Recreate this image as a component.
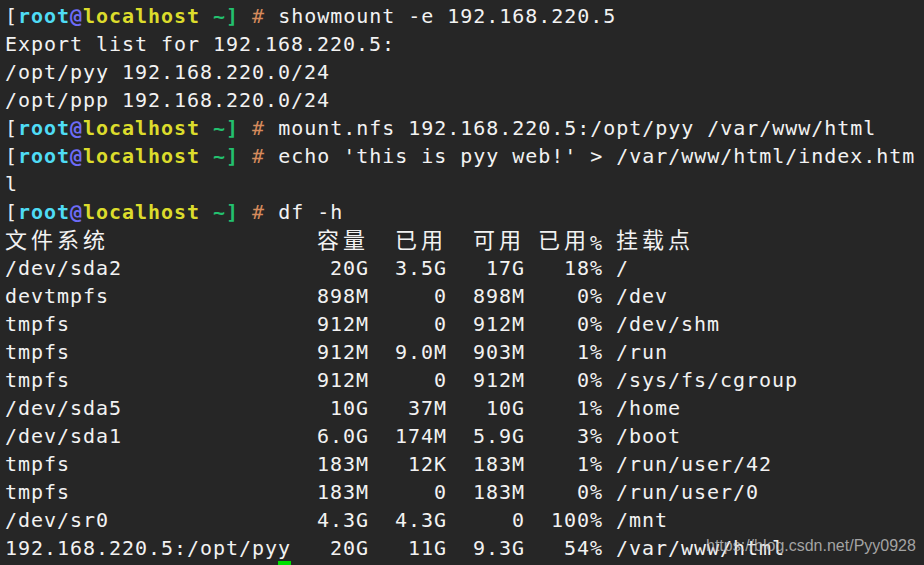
import React from "react";

const MONO = '"DejaVu Sans Mono", "Noto Sans CJK SC", monospace';

function isCJK(ch: string) {
  return /[\u2e80-\u9fff\uff00-\uffef]/.test(ch);
}

function Txt({ text, className = "" }: { text: string; className?: string }) {
  const parts: React.ReactNode[] = [];
  let buf = "";
  let key = 0;
  const flush = () => {
    if (buf) {
      parts.push(<span key={key++}>{buf}</span>);
      buf = "";
    }
  };
  for (const ch of Array.from(text)) {
    if (isCJK(ch)) {
      flush();
      parts.push(
        <span
          key={key++}
          className="relative top-[-2px] inline-block w-[26px] text-[22px] leading-[28px]"
          style={{ fontFamily: '"Noto Sans CJK SC", sans-serif' }}
        >
          {ch}
        </span>
      );
    } else buf += ch;
  }
  flush();
  return <span className={className}>{parts}</span>;
}

function Prompt({ cmd }: { cmd: string }) {
  return (
    <div className="h-[28px] whitespace-pre">
      <span className="text-[#f0f0f0]">[</span>
      <span className="font-bold text-[#4fdcf5]">root</span>
      <span className="font-bold text-[#6e6cf6]">@</span>
      <span className="font-bold text-[#dcdc2c]">localhost</span>
      <span> </span>
      <span className="font-bold text-[#23c06f]">~]</span>
      <span> </span>
      <span className="text-[#d58a5c]">#</span>
      <span className="text-[#f2f2f2]"> {cmd}</span>
    </div>
  );
}

function Line({ text }: { text: string }) {
  return (
    <div className="h-[28px] whitespace-pre text-[#f2f2f2]">
      <Txt text={text} />
    </div>
  );
}

const rows: [string, string, string, string, string, string][] = [
  ["/dev/sda2", "20G", "3.5G", "17G", "18%", "/"],
  ["devtmpfs", "898M", "0", "898M", "0%", "/dev"],
  ["tmpfs", "912M", "0", "912M", "0%", "/dev/shm"],
  ["tmpfs", "912M", "9.0M", "903M", "1%", "/run"],
  ["tmpfs", "912M", "0", "912M", "0%", "/sys/fs/cgroup"],
  ["/dev/sda5", "10G", "37M", "10G", "1%", "/home"],
  ["/dev/sda1", "6.0G", "174M", "5.9G", "3%", "/boot"],
  ["tmpfs", "183M", "12K", "183M", "1%", "/run/user/42"],
  ["tmpfs", "183M", "0", "183M", "0%", "/run/user/0"],
  ["/dev/sr0", "4.3G", "4.3G", "0", "100%", "/mnt"],
  ["192.168.220.5:/opt/pyy", "20G", "11G", "9.3G", "54%", "/var/www/html"],
];

export default function App() {
  return (
    <div
      className="relative w-[924px] h-[565px] overflow-hidden bg-[#262626] pl-[5px] pt-[2px] text-[20px] leading-[28px] tracking-[0.96px]"
      style={{ fontFamily: MONO }}
    >
      <Prompt cmd="showmount -e 192.168.220.5" />
      <Line text="Export list for 192.168.220.5:" />
      <Line text="/opt/pyy 192.168.220.0/24" />
      <Line text="/opt/ppp 192.168.220.0/24" />
      <Prompt cmd="mount.nfs 192.168.220.5:/opt/pyy /var/www/html" />
      <Prompt cmd="echo 'this is pyy web!' > /var/www/html/index.htm" />
      <Line text="l" />
      <Prompt cmd="df -h" />
      <Line text={"文件系统                容量  已用  可用 已用% 挂载点"} />
      {rows.map((r, i) => (
        <Line
          key={i}
          text={
            r[0].padEnd(24) +
            r[1].padStart(4) +
            r[2].padStart(6) +
            r[3].padStart(6) +
            r[4].padStart(6) +
            " " +
            r[5]
          }
        />
      ))}
      <div className="absolute left-[278px] top-[561px] h-[4px] w-[13px] bg-[#00e000]" />
      <div
        className="absolute left-[706px] top-[538px] text-[16px] leading-none tracking-normal text-[rgba(200,200,200,0.78)]"
        style={{ fontFamily: '"Liberation Sans", Arial, sans-serif' }}
      >
        https://blog.csdn.net/Pyy0928
      </div>
    </div>
  );
}
